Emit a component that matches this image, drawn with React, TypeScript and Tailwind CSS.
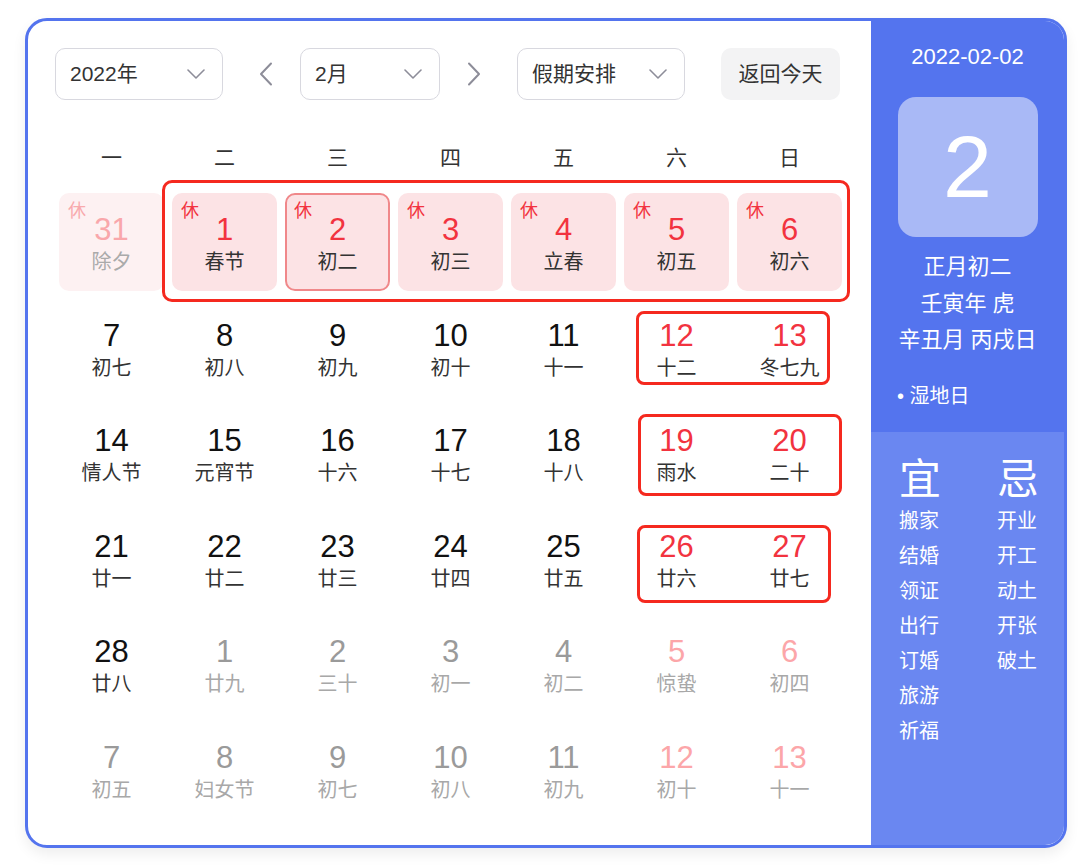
import React from 'react';

type Day = {
    n: number;
    lunar: string;
    kind?: 'rest' | 'restFaded' | 'red' | 'gray' | 'grayRed';
    selected?: boolean;
};

const WEEK = ['一', '二', '三', '四', '五', '六', '日'];

const ROWS: Day[][] = [
    [
        { n: 31, lunar: '除夕', kind: 'restFaded' },
        { n: 1, lunar: '春节', kind: 'rest' },
        { n: 2, lunar: '初二', kind: 'rest', selected: true },
        { n: 3, lunar: '初三', kind: 'rest' },
        { n: 4, lunar: '立春', kind: 'rest' },
        { n: 5, lunar: '初五', kind: 'rest' },
        { n: 6, lunar: '初六', kind: 'rest' },
    ],
    [
        { n: 7, lunar: '初七' },
        { n: 8, lunar: '初八' },
        { n: 9, lunar: '初九' },
        { n: 10, lunar: '初十' },
        { n: 11, lunar: '十一' },
        { n: 12, lunar: '十二', kind: 'red' },
        { n: 13, lunar: '冬七九', kind: 'red' },
    ],
    [
        { n: 14, lunar: '情人节' },
        { n: 15, lunar: '元宵节' },
        { n: 16, lunar: '十六' },
        { n: 17, lunar: '十七' },
        { n: 18, lunar: '十八' },
        { n: 19, lunar: '雨水', kind: 'red' },
        { n: 20, lunar: '二十', kind: 'red' },
    ],
    [
        { n: 21, lunar: '廿一' },
        { n: 22, lunar: '廿二' },
        { n: 23, lunar: '廿三' },
        { n: 24, lunar: '廿四' },
        { n: 25, lunar: '廿五' },
        { n: 26, lunar: '廿六', kind: 'red' },
        { n: 27, lunar: '廿七', kind: 'red' },
    ],
    [
        { n: 28, lunar: '廿八' },
        { n: 1, lunar: '廿九', kind: 'gray' },
        { n: 2, lunar: '三十', kind: 'gray' },
        { n: 3, lunar: '初一', kind: 'gray' },
        { n: 4, lunar: '初二', kind: 'gray' },
        { n: 5, lunar: '惊蛰', kind: 'grayRed' },
        { n: 6, lunar: '初四', kind: 'grayRed' },
    ],
    [
        { n: 7, lunar: '初五', kind: 'gray' },
        { n: 8, lunar: '妇女节', kind: 'gray' },
        { n: 9, lunar: '初七', kind: 'gray' },
        { n: 10, lunar: '初八', kind: 'gray' },
        { n: 11, lunar: '初九', kind: 'gray' },
        { n: 12, lunar: '初十', kind: 'grayRed' },
        { n: 13, lunar: '十一', kind: 'grayRed' },
    ],
];

const YI = ['搬家', '结婚', '领证', '出行', '订婚', '旅游', '祈福'];
const JI = ['开业', '开工', '动土', '开张', '破土'];

function ChevronDown() {
    return (
        <svg width="18" height="10" viewBox="0 0 18 10" fill="none">
            <polyline points="1,1 9,9 17,1" stroke="#8d8d99" strokeWidth="1.6" strokeLinecap="round" strokeLinejoin="round" />
        </svg>
    );
}

function Arrow({ dir }: { dir: 'left' | 'right' }) {
    return (
        <svg width="16" height="24" viewBox="0 0 16 24" fill="none">
            <polyline
                points={dir === 'left' ? '13,1.5 3,12 13,22.5' : '3,1.5 13,12 3,22.5'}
                stroke="#8d8d99"
                strokeWidth="2"
                strokeLinecap="round"
                strokeLinejoin="round"
            />
        </svg>
    );
}

function Select({ label, width }: { label: string; width: string }) {
    return (
        <div className={`${width} h-[52px] flex items-center justify-between pl-[14px] pr-[17px] border border-[#d8d8df] rounded-[10px] text-[21px] text-[#333]`}>
            <span>{label}</span>
            <ChevronDown />
        </div>
    );
}

function Cell({ d }: { d: Day }) {
    const pink = d.kind === 'rest' || d.kind === 'restFaded';
    let bg = '';
    if (d.kind === 'rest') bg = 'bg-[#fce3e5]';
    if (d.kind === 'restFaded') bg = 'bg-[#fdf1f2]';

    let num = 'text-[#111]';
    let lunar = 'text-[#333]';
    if (d.kind === 'rest' || d.kind === 'red') num = 'text-[#f2333f]';
    if (d.kind === 'restFaded') {
        num = 'text-[#f9a7ab]';
        lunar = 'text-[#aaa]';
    }
    if (d.kind === 'gray') {
        num = 'text-[#9a9a9a]';
        lunar = 'text-[#a8a8a8]';
    }
    if (d.kind === 'grayRed') {
        num = 'text-[#fca6a9]';
        lunar = 'text-[#a8a8a8]';
    }

    return (
        <div className="p-[4px]">
            <div
                className={`relative h-full rounded-[10px] flex flex-col items-center justify-center pt-[5px] ${bg} ${
                    d.selected ? 'border-2 border-[#f0888a]' : ''
                }`}
            >
                {pink && (
                    <span
                        className={`absolute text-[18px] leading-[20px] ${
                            d.kind === 'restFaded' ? 'text-[#f8aaad]' : 'text-[#f2333f]'
                        } ${d.selected ? 'top-[6px] left-[7px]' : 'top-[8px] left-[9px]'}`}
                    >
                        休
                    </span>
                )}
                <span className={`text-[31px] leading-[32px] ${num}`}>{d.n}</span>
                <span className={`mt-[4px] text-[20px] leading-[24px] ${lunar}`}>{d.lunar}</span>
            </div>
        </div>
    );
}

export default function App() {
    return (
        <div className="min-h-screen bg-white pt-[18px] pl-[25px] font-['Liberation_Sans','Noto_Sans_CJK_SC',sans-serif]">
            <div className="w-[1042px] h-[830px] flex rounded-[22px] border-[3px] border-[#5474ee] overflow-hidden bg-white shadow-[0_6px_14px_rgba(0,0,0,0.07)]">
                {/* calendar */}
                <div className="flex-1 pt-[27px] pl-[27px]">
                    <div className="flex items-center h-[52px]">
                        <Select label="2022年" width="w-[168px]" />
                        <div className="ml-[35px]">
                            <Arrow dir="left" />
                        </div>
                        <div className="ml-[26px]">
                            <Select label="2月" width="w-[140px]" />
                        </div>
                        <div className="ml-[26px]">
                            <Arrow dir="right" />
                        </div>
                        <div className="ml-[35px]">
                            <Select label="假期安排" width="w-[168px]" />
                        </div>
                        <button className="ml-[36px] w-[119px] h-[52px] rounded-[10px] bg-[#f3f3f4] text-[21px] text-[#333]">
                            返回今天
                        </button>
                    </div>

                    <div className="w-[791px] mt-[38px] grid grid-cols-7 h-[40px] items-center text-center text-[21px] text-[#333]">
                        {WEEK.map((w) => (
                            <span key={w}>{w}</span>
                        ))}
                    </div>

                    <div className="relative w-[791px] mt-[11px]">
                        {ROWS.map((row, i) => (
                            <div key={i} className="grid grid-cols-7 h-[105.5px]">
                                {row.map((d, j) => (
                                    <Cell key={j} d={d} />
                                ))}
                            </div>
                        ))}

                        {/* red annotation frames */}
                        <div className="absolute left-[107px] top-[-9px] w-[688px] h-[122px] border-[3px] border-[#f5291f] rounded-[10px]" />
                        <div className="absolute left-[581px] top-[122px] w-[194px] h-[74px] border-[3px] border-[#f5291f] rounded-[8px]" />
                        <div className="absolute left-[583px] top-[225px] w-[204px] h-[82px] border-[3px] border-[#f5291f] rounded-[8px]" />
                        <div className="absolute left-[582px] top-[336px] w-[194px] h-[78px] border-[3px] border-[#f5291f] rounded-[8px]" />
                    </div>
                </div>

                {/* side panel */}
                <div className="w-[193px] flex flex-col text-white">
                    <div className="h-[411px] bg-[#5474ee] flex flex-col">
                        <div className="pt-[23px] text-center text-[22px] leading-[26px]">2022-02-02</div>
                        <div className="mt-[27px] mx-auto w-[140px] h-[140px] rounded-[18px] bg-[#a9b9f6] flex items-center justify-center">
                            <span className="text-[88px] leading-none">2</span>
                        </div>
                        <div className="mt-[12px] text-center text-[22px] leading-[36.5px]">
                            <div>正月初二</div>
                            <div>壬寅年 虎</div>
                            <div>辛丑月 丙戌日</div>
                        </div>
                        <div className="mt-[24px] pl-[26px] text-[20px] leading-[26px]">• 湿地日</div>
                    </div>
                    <div className="flex-1 bg-[#6a87f1] flex pt-[25px] pl-[28px]">
                        <div className="w-[98px] flex flex-col">
                            <span className="text-[42px] leading-[46px]">宜</span>
                            <div className="mt-[1px] text-[20px] leading-[35px]">
                                {YI.map((t) => (
                                    <div key={t}>{t}</div>
                                ))}
                            </div>
                        </div>
                        <div className="flex flex-col">
                            <span className="text-[42px] leading-[46px]">忌</span>
                            <div className="mt-[1px] text-[20px] leading-[35px]">
                                {JI.map((t) => (
                                    <div key={t}>{t}</div>
                                ))}
                            </div>
                        </div>
                    </div>
                </div>
            </div>
        </div>
    );
}
